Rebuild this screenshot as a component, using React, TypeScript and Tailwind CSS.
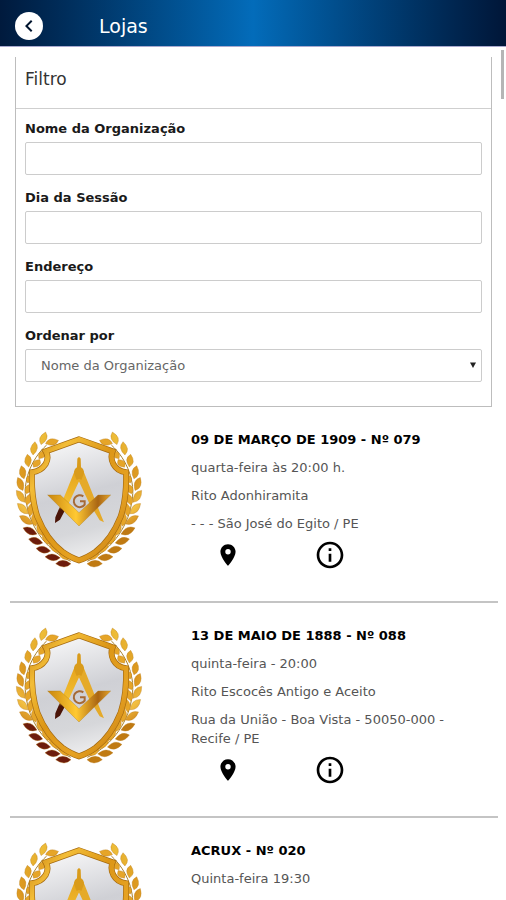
import { MdChevronLeft, MdInfoOutline, MdPlace } from "react-icons/md"

type Lodge = {
  name: string
  session: string
  rite?: string
  address?: string
}

const lodges: Lodge[] = [
  {
    name: "09 DE MARÇO DE 1909 - Nº 079",
    session: "quarta-feira às 20:00 h.",
    rite: "Rito Adonhiramita",
    address: "- - - São José do Egito / PE",
  },
  {
    name: "13 DE MAIO DE 1888 - Nº 088",
    session: "quinta-feira - 20:00",
    rite: "Rito Escocês Antigo e Aceito",
    address: "Rua da União - Boa Vista - 50050-000 - Recife / PE",
  },
  {
    name: "ACRUX - Nº 020",
    session: "Quinta-feira 19:30",
  },
]

const textFields = [
  { id: "nome", label: "Nome da Organização" },
  { id: "dia", label: "Dia da Sessão" },
  { id: "endereco", label: "Endereço" },
]

// x, y, rotation and half length of every leaf on the left branch
const leaves = [
  [130, 55, -70, 20],
  [156, 66, -14, 20],
  [102, 85, -82, 20],
  [127, 104, -50, 16],
  [84, 122, -96, 19],
  [110, 130, -50, 15],
  [68, 157, -102, 20],
  [90, 176, -60, 15],
  [61, 192, 68, 21],
  [86, 206, -66, 17],
  [62, 229, 54, 22],
  [86, 238, -74, 18],
  [68, 266, 44, 22],
  [93, 268, -84, 20],
  [78, 300, 32, 23],
  [104, 298, 80, 21],
  [90, 333, 24, 23],
  [121, 328, 66, 22],
  [107, 363, 16, 22],
  [139, 356, 54, 22],
  [130, 389, 10, 22],
  [163, 383, 42, 22],
  [158, 412, 4, 23],
  [191, 406, 34, 20],
  [190, 431, 0, 23],
]

const shield =
  "M237 58 L137 94 Q148 112 137 132 Q122 154 96 157 Q93 232 112 290 Q140 360 188 396 Q214 414 237 421 Q260 414 286 396 Q334 360 362 290 Q381 232 378 157 Q352 154 340 132 Q330 112 338 94 Z"

function Branch({ id, dark }: { id: string; dark: string }) {
  return (
    <g>
      <defs>
        <linearGradient id={id} gradientUnits="userSpaceOnUse" x1="0" y1="40" x2="0" y2="440">
          <stop offset="0" stopColor="#efc03a" />
          <stop offset="0.35" stopColor="#d9921b" />
          <stop offset="0.55" stopColor="#f3c143" />
          <stop offset="0.75" stopColor="#c8780f" />
          <stop offset="1" stopColor={dark} />
        </linearGradient>
      </defs>
      <path
        d="M140 75 C90 120 68 190 78 240 C86 310 130 385 212 424"
        fill="none"
        stroke="#a8812c"
        strokeWidth="3"
      />
      {leaves.map(([x, y, angle, size], i) => {
        const shape = `M${x - size} ${y} Q${x - 4} ${y - 20} ${x + size} ${y} Q${x + 4} ${y + 20} ${x - size} ${y}Z`
        const outer = i % 2 === 0 && y > 310
        return (
          <path
            key={i}
            d={shape}
            transform={`rotate(${angle} ${x} ${y})`}
            fill={outer ? dark : i % 2 ? "#e6a528" : `url(#${id})`}
            stroke="#b87a18"
            strokeWidth="1"
          />
        )
      })}
    </g>
  )
}

function Crest({ id }: { id: string }) {
  return (
    <svg viewBox="45 30 384 414" className="h-[138px] w-32" role="img" aria-label="Brasão">
      <defs>
        <linearGradient id={`${id}-gold`} x1="0" y1="0" x2="1" y2="1">
          <stop offset="0" stopColor="#c98210" />
          <stop offset="0.2" stopColor="#f3bd37" />
          <stop offset="0.45" stopColor="#dc9617" />
          <stop offset="0.7" stopColor="#e6a222" />
          <stop offset="1" stopColor="#c47b10" />
        </linearGradient>
        <linearGradient id={`${id}-steel`} x1="0.4" y1="0" x2="0.6" y2="1">
          <stop offset="0" stopColor="#f6f6f7" />
          <stop offset="0.45" stopColor="#cfd0d5" />
          <stop offset="0.75" stopColor="#d6d7da" />
          <stop offset="1" stopColor="#f0f0f1" />
        </linearGradient>
        <linearGradient id={`${id}-square`} x1="0" y1="0" x2="1" y2="0">
          <stop offset="0" stopColor="#c9860f" />
          <stop offset="0.45" stopColor="#ffc933" />
          <stop offset="0.8" stopColor="#a96513" />
          <stop offset="1" stopColor="#e5a52c" />
        </linearGradient>
        <linearGradient id={`${id}-leg`} x1="0" y1="0" x2="0" y2="1">
          <stop offset="0" stopColor="#e5a41d" />
          <stop offset="0.65" stopColor="#f3c033" />
          <stop offset="0.75" stopColor="#4a1408" />
          <stop offset="1" stopColor="#4a1408" />
        </linearGradient>
      </defs>
      <Branch id={`${id}-left`} dark="#6d1c0c" />
      <g transform="matrix(-1 0 0 1 474 0)">
        <Branch id={`${id}-right`} dark="#c07a12" />
      </g>
      <path d={shield} fill={`url(#${id}-steel)`} stroke="#a56a10" strokeWidth="18" strokeLinejoin="miter" />
      <path d={shield} fill="none" stroke={`url(#${id}-gold)`} strokeWidth="14" strokeLinejoin="miter" />
      <path d="M250 229 A18 18 0 1 0 254 254 L254 244 L240 244" fill="none" stroke="#a66a36" strokeWidth="6" />
      <path d="M224 152 L239 152 L239 180 L208 246 L180 299 L165 309 L166 292 L196 222 Z" fill={`url(#${id}-leg)`} />
      <path d="M235 152 L250 152 L278 222 L304 288 L312 307 L299 301 L266 246 L235 180 Z" fill="#e5aa29" />
      <path
        d="M232 116 Q237 108 242 116 L243 142 Q252 147 252 160 L244 180 L237 176 L230 180 L222 160 Q222 147 231 142 Z"
        fill="#d99b1b"
      />
      <path
        d="M143 225 L181 225 L237 278 L294 225 L332 225 L237 318 Z"
        fill={`url(#${id}-square)`}
        stroke="#a87213"
        strokeWidth="1"
      />
    </svg>
  )
}

function Header() {
  return (
    <header className="flex h-[47px] items-center border-b border-[#a9a9cf] bg-linear-to-r from-[#001a3d] via-[#036cba] to-[#001638] pt-1.5 pl-[15px] text-white">
      <button
        type="button"
        aria-label="Voltar"
        className="flex size-7 items-center justify-center rounded-full bg-white text-[#00142e]"
      >
        <MdChevronLeft className="size-6" />
      </button>
      <h1 className="ml-14 text-[19px] leading-6">Lojas</h1>
    </header>
  )
}

function Filter() {
  return (
    <form className="mt-2.5 mr-[14px] ml-[15px] border-x border-b border-[#bdbdbd]">
      <h2 className="border-b border-[#cfcfcf] px-[9px] pt-3 pb-[19px] text-[17px] leading-5 text-[#333]">Filtro</h2>
      <div className="flex flex-col gap-[13px] px-[9px] pt-2.5 pb-6">
        {textFields.map(({ id, label }) => (
          <div key={id} className="flex flex-col gap-1">
            <label htmlFor={id} className="font-bold text-[#1a1a1a]">
              {label}
            </label>
            <input id={id} type="text" className="h-[33px] w-full rounded-xs border border-[#ccc] px-3.5" />
          </div>
        ))}
        <div className="flex flex-col gap-1">
          <label htmlFor="ordenar" className="font-bold text-[#1a1a1a]">
            Ordenar por
          </label>
          <div className="relative">
            <select
              id="ordenar"
              className="block h-[33px] w-full appearance-none rounded-xs border border-[#ccc] bg-white px-[15px] text-[#666]"
            >
              <option>Nome da Organização</option>
            </select>
            <svg viewBox="0 0 6 6" className="pointer-events-none absolute top-[13px] right-1.5 size-1.5">
              <path d="M0 0.5 H6 L3 6 Z" fill="#222" />
            </svg>
          </div>
        </div>
      </div>
    </form>
  )
}

function LodgeItem({ lodge, id }: { lodge: Lodge; id: string }) {
  return (
    <li className="flex items-start gap-12 border-b-2 border-[#c4c4c4] pt-[23px] pr-4 pb-[30px] pl-[5px]">
      <div className="shrink-0">
        <Crest id={id} />
      </div>
      <div className="min-w-0 flex-1 text-[#555]">
        <div className="flex flex-col gap-[9px]">
          <h3 className="font-bold text-black">{lodge.name}</h3>
          <p>{lodge.session}</p>
          {lodge.rite && <p>{lodge.rite}</p>}
          {lodge.address && <p>{lodge.address}</p>}
        </div>
        {lodge.address && (
          <div className="mt-1.5 flex gap-[70px] pl-[21px] text-black">
            <button type="button" aria-label="Mapa" className="flex size-8 items-center justify-center">
              <MdPlace className="size-[26px]" />
            </button>
            <button type="button" aria-label="Informações" className="flex size-8 items-center justify-center">
              <MdInfoOutline className="size-8" />
            </button>
          </div>
        )}
      </div>
    </li>
  )
}

export default function App() {
  return (
    <div className="flex h-screen flex-col overflow-hidden bg-white font-['DejaVu_Sans',Verdana,sans-serif] text-[13px] leading-[19px]">
      <Header />
      <main className="relative min-h-0 flex-1 overflow-hidden">
        <div className="absolute top-[3px] right-0.5 h-[49px] w-[3px] bg-[#b5b5b5]" />
        <Filter />
        <ul className="mr-2 ml-2.5">
          {lodges.map((lodge, i) => (
            <LodgeItem key={lodge.name} lodge={lodge} id={`crest-${i}`} />
          ))}
        </ul>
      </main>
    </div>
  )
}
